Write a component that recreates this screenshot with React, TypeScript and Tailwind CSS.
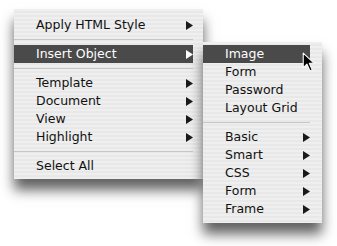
import React from 'react';

type Item =
  | { kind: 'item'; label: string; sub?: boolean; active?: boolean }
  | { kind: 'sep' };

const mainItems: Item[] = [
  { kind: 'item', label: 'Apply HTML Style', sub: true },
  { kind: 'sep' },
  { kind: 'item', label: 'Insert Object', sub: true, active: true },
  { kind: 'sep' },
  { kind: 'item', label: 'Template', sub: true },
  { kind: 'item', label: 'Document', sub: true },
  { kind: 'item', label: 'View', sub: true },
  { kind: 'item', label: 'Highlight', sub: true },
  { kind: 'sep' },
  { kind: 'item', label: 'Select All' },
];

const subItems: Item[] = [
  { kind: 'item', label: 'Image', active: true },
  { kind: 'item', label: 'Form' },
  { kind: 'item', label: 'Password' },
  { kind: 'item', label: 'Layout Grid' },
  { kind: 'sep' },
  { kind: 'item', label: 'Basic', sub: true },
  { kind: 'item', label: 'Smart', sub: true },
  { kind: 'item', label: 'CSS', sub: true },
  { kind: 'item', label: 'Form', sub: true },
  { kind: 'item', label: 'Frame', sub: true },
];

function Arrow({ active }: { active?: boolean }) {
  return (
    <svg width="7" height="9" viewBox="0 0 7 9" className="shrink-0">
      <polygon points="0,0 7,4.5 0,9" fill={active ? '#ffffff' : '#1a1a1a'} />
    </svg>
  );
}

function Menu({ items, className }: { items: Item[]; className: string }) {
  return (
    <div
      className={`bg-[repeating-linear-gradient(to_bottom,#efefef_0px,#efefef_2px,#e8e8e8_2px,#e8e8e8_4px)] shadow-[0_11px_12px_rgba(0,0,0,0.62)] ${className}`}
    >
      {items.map((it, i) =>
        it.kind === 'sep' ? (
          <div key={i} className="h-[11px] flex items-center">
            <div className="h-px w-full bg-[#c6c6c6]" />
          </div>
        ) : (
          <div
            key={i}
            className={`h-[18px] flex items-center justify-between pl-[22px] ${
              it.active ? 'bg-[#4a4a4a] text-white' : 'text-[#111]'
            }`}
          >
            <span className="leading-none pt-px">{it.label}</span>
            {it.sub && <Arrow active={it.active} />}
          </div>
        )
      )}
    </div>
  );
}

export default function App() {
  return (
    <div className="relative w-[337px] h-[246px] bg-white overflow-hidden font-['DejaVu_Sans',sans-serif] text-[12.5px]">
      <div className="flex items-start pt-[9px] pl-[14px]">
        <Menu items={mainItems} className="w-[189px] pt-[7px] pb-[4px] pr-[10px]" />
        <Menu items={subItems} className="w-[119px] mt-[33px] pt-[3px] pb-[5px] pr-[12px] relative" />
      </div>
      {/* mouse pointer */}
      <svg
        width="14"
        height="21"
        viewBox="0 0 13 20"
        className="absolute left-[302px] top-[52px]"
      >
        <polygon
          points="1,1 1,15 4.5,11.5 7.5,18 9.5,17 6.8,10.8 11.5,10.8"
          fill="#000"
          stroke="#fff"
          strokeWidth="1"
          strokeLinejoin="round"
        />
      </svg>
    </div>
  );
}
